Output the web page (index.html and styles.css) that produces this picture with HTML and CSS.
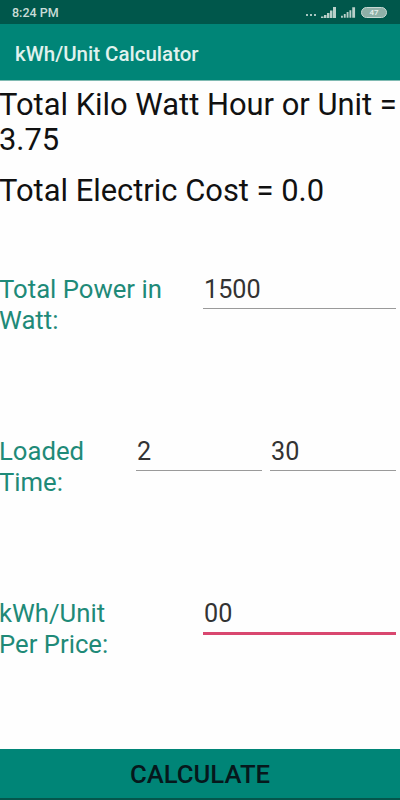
FILE: index.html
```html
<!DOCTYPE html>
<html lang="en">
<head>
<meta charset="utf-8">
<title>kWh/Unit Calculator</title>
<link rel="stylesheet" href="styles.css">
</head>
<body>
<div class="app">
  <div class="status">
    <span class="time">8:24 PM</span>
    <div class="status-icons">
      <span class="dots"><i></i><i></i><i></i></span>
      <svg class="signal" viewBox="0 0 16 11"><path d="M0 11h2.500V9.500H0zM3 11h2.500V8H3zM6 11h2.500V6H6zM9 11h2.500V3.500H9zM12 11h3V0h-3z"/></svg>
      <svg class="signal small" viewBox="0 0 16 11"><path d="M0 11h2V9H0zM3 11h2V7H3zM6 11h2V5H6zM9 11h2V3H9zM12 11h3V0h-3z"/></svg>
      <span class="battery">47</span>
    </div>
  </div>
  <header class="bar">kWh/Unit Calculator</header>
  <main class="content">
    <p class="result first">Total Kilo Watt Hour or Unit = 3.75</p>
    <p class="result second">Total Electric Cost = 0.0</p>
    <div class="row power">
      <div class="label wide">Total Power in Watt:</div>
      <div class="field grow">1500</div>
    </div>
    <div class="row time-row">
      <div class="label narrow">Loaded Time:</div>
      <div class="field half">2</div>
      <div class="field half">30</div>
    </div>
    <div class="row price">
      <div class="label wide">kWh/Unit<br>Per Price:</div>
      <div class="field grow active">00</div>
    </div>
  </main>
  <div class="calc">CALCULATE</div>
</div>
</body>
</html>
```
FILE: styles.css
```css
* { box-sizing: border-box; }
html, body { margin: 0; padding: 0; }
body { width: 400px; height: 800px; overflow: hidden; background: #fefefe; font-family: Roboto, "Liberation Sans", sans-serif; }
.app { display: flex; flex-direction: column; height: 800px; }
.status { height: 24px; flex: none; background: #00574b; color: #c9dcd7; display: flex; align-items: center; justify-content: space-between; padding: 0 13px 0 12px; font-size: 12.5px; font-weight: 500; }
.status-icons { display: flex; align-items: center; gap: 4px; }
.dots { display: flex; gap: 2px; align-items: flex-end; height: 10px; padding-bottom: 1px; margin-right: 1px; }
.dots i { width: 2px; height: 2px; background: #dfeae7; border-radius: 50%; }
.signal { width: 16px; height: 11px; fill: #b9d0ca; }
.signal.small { width: 15px; }
.battery { width: 26px; height: 11px; border: 1px solid #c6d8d3; border-radius: 6px; background: #8fb0a8; color: #e8f0ee; font-size: 8px; line-height: 9px; text-align: center; margin-left: 1px; }
.bar { height: 57px; flex: none; background: #008577; color: #e0f2ee; font-size: 20.5px; font-weight: 500; padding: 20px 0 0 15px; line-height: 20px; border-bottom: 1px solid #7fbab2; }
.content { flex: 1; min-height: 0; padding: 7px 4px 0 0; }
.result { margin: 0 -4px 0 -1px; color: #111; font-size: 30.9px; line-height: 35px; }
.first { margin-top: -1px; }
.second { margin-top: 16px; }
.row { display: flex; align-items: flex-start; }
.label { color: #1f8a78; font-size: 25.7px; line-height: 31px; padding-top: 1px; margin-left: -1px; }
.wide { width: 204px; }
.narrow { width: 137px; }
.field { height: 36px; color: #333; font-size: 25.2px; line-height: 34px; padding-left: 1px; border-bottom: 1px solid #9a9a9a; }
.grow { flex: 1; }
.half { width: 126px; }
.half + .half { margin-left: 8px; }
.power { margin-top: 65px; }
.time-row { margin-top: 99px; }
.price { margin-top: 99px; }
.active { border-bottom: 3px solid #d9476f; height: 38px; }
.calc { height: 51px; flex: none; background: #008577; color: #06181c; font-size: 25.7px; font-weight: 500; text-align: center; line-height: 51px; border-bottom: 2px solid #04564c; }
```
